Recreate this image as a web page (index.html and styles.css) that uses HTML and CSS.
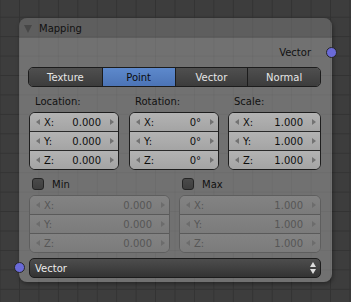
FILE: index.html
```html
<!DOCTYPE html>
<html>
<head>
<meta charset="utf-8">
<link rel="stylesheet" href="styles.css">
</head>
<body>
<div class="canvas">
  <div class="node">
    <div class="hdr"><span class="tri"></span><span>Mapping</span></div>
    <div class="body">
      <div class="out">Vector<span class="sock sock-out"></span></div>
      <div class="tabs">
        <div class="tab">Texture</div>
        <div class="tab on">Point</div>
        <div class="tab">Vector</div>
        <div class="tab">Normal</div>
      </div>
      <div class="cols">
        <div class="col">
          <div class="lbl">Location:</div>
          <div class="num">
            <div class="row"><span class="al"></span><span class="k">X:</span><span class="v">0.000</span><span class="ar"></span></div>
            <div class="row"><span class="al"></span><span class="k">Y:</span><span class="v">0.000</span><span class="ar"></span></div>
            <div class="row"><span class="al"></span><span class="k">Z:</span><span class="v">0.000</span><span class="ar"></span></div>
          </div>
        </div>
        <div class="col">
          <div class="lbl">Rotation:</div>
          <div class="num">
            <div class="row"><span class="al"></span><span class="k">X:</span><span class="v">0°</span><span class="ar"></span></div>
            <div class="row"><span class="al"></span><span class="k">Y:</span><span class="v">0°</span><span class="ar"></span></div>
            <div class="row"><span class="al"></span><span class="k">Z:</span><span class="v">0°</span><span class="ar"></span></div>
          </div>
        </div>
        <div class="col">
          <div class="lbl">Scale:</div>
          <div class="num">
            <div class="row"><span class="al"></span><span class="k">X:</span><span class="v">1.000</span><span class="ar"></span></div>
            <div class="row"><span class="al"></span><span class="k">Y:</span><span class="v">1.000</span><span class="ar"></span></div>
            <div class="row"><span class="al"></span><span class="k">Z:</span><span class="v">1.000</span><span class="ar"></span></div>
          </div>
        </div>
      </div>
      <div class="cols2">
        <div class="col">
          <div class="chk"><span class="cb"></span>Min</div>
          <div class="num dis">
            <div class="row"><span class="al"></span><span class="k">X:</span><span class="v">0.000</span><span class="ar"></span></div>
            <div class="row"><span class="al"></span><span class="k">Y:</span><span class="v">0.000</span><span class="ar"></span></div>
            <div class="row"><span class="al"></span><span class="k">Z:</span><span class="v">0.000</span><span class="ar"></span></div>
          </div>
        </div>
        <div class="col">
          <div class="chk"><span class="cb"></span>Max</div>
          <div class="num dis">
            <div class="row"><span class="al"></span><span class="k">X:</span><span class="v">1.000</span><span class="ar"></span></div>
            <div class="row"><span class="al"></span><span class="k">Y:</span><span class="v">1.000</span><span class="ar"></span></div>
            <div class="row"><span class="al"></span><span class="k">Z:</span><span class="v">1.000</span><span class="ar"></span></div>
          </div>
        </div>
      </div>
      <div class="dd">
        <span class="sock sock-in"></span>
        <span class="ddt">Vector</span>
        <span class="ud"><span class="up"></span><span class="dn"></span></span>
      </div>
    </div>
  </div>
</div>
</body>
</html>
```

FILE: styles.css
```css
html, body {
  margin: 0;
  padding: 0;
  background: #3d3d3d;
}

.canvas {
  width: 351px;
  height: 302px;
  box-sizing: border-box;
  padding: 18px 0 0 19px;
  background-color: #3d3d3d;
  background-image:
    linear-gradient(to right, #333333 1px, transparent 1px),
    linear-gradient(to bottom, #333333 1px, transparent 1px);
  background-size: 19.45px 19.45px;
  background-position: 19px 16.7px;
  font-family: "DejaVu Sans", "Liberation Sans", sans-serif;
  font-size: 10px;
  overflow: hidden;
}

.node {
  width: 313px;
  border-radius: 8px;
  background-color: #717171;
  background-image:
    linear-gradient(to right, rgba(0, 0, 0, 0.045) 1px, transparent 1px),
    linear-gradient(to bottom, rgba(0, 0, 0, 0.045) 1px, transparent 1px);
  background-size: 19.45px 19.45px;
  background-position: 19px 16.7px;
  background-attachment: fixed;
  box-shadow: 1px 2px 4px rgba(0, 0, 0, 0.35);
}

.hdr {
  height: 20px;
  display: flex;
  align-items: center;
  background-color: rgba(0, 0, 0, 0.17);
  border-radius: 8px 8px 0 0;
  color: #111;
  padding-left: 5px;
}

.tri {
  width: 0;
  height: 0;
  border-left: 4.5px solid transparent;
  border-right: 4.5px solid transparent;
  border-top: 8px solid #474747;
  margin-right: 7px;
  margin-top: 1px;
}

.body {
  padding: 0 11px 4px 10px;
}

.out {
  position: relative;
  margin-top: 5px;
  height: 20px;
  line-height: 20px;
  text-align: right;
  padding-right: 10px;
  color: #111;
}

.sock {
  position: absolute;
  width: 9px;
  height: 9px;
  border-radius: 50%;
  background: #6a6ad8;
  border: 1px solid #262626;
}

.sock-out {
  right: -16px;
  top: 4px;
}

.sock-in {
  left: -16px;
  top: 3px;
}

.tabs {
  margin-top: 4px;
  margin-left: -1px;
  height: 20px;
  box-sizing: border-box;
  display: grid;
  grid-template-columns: repeat(4, 1fr);
  border: 1px solid #1c1c1c;
  border-radius: 5px;
  overflow: hidden;
}

.tab {
  display: flex;
  align-items: center;
  justify-content: center;
  color: #e6e6e6;
  background: linear-gradient(#4f4f4f, #3c3c3c);
  border-left: 1px solid #1c1c1c;
}

.tab:first-child {
  border-left: none;
}

.tab.on {
  color: #0c0c0c;
  background: linear-gradient(#5d89cc, #4c74b6);
}

.cols {
  display: grid;
  grid-template-columns: 90px 90px 1fr;
  column-gap: 10px;
}

.cols .col:nth-child(3) {
  margin-left: -1px;
}

.lbl {
  padding: 8px 0 3px 6px;
  line-height: 14px;
  color: #111;
}

.num {
  border: 1px solid #1e1e1e;
  border-radius: 6px;
  overflow: hidden;
  background: #a9a9a9;
}

.row {
  height: 18px;
  display: flex;
  align-items: center;
  padding: 0 4px 0 6px;
  color: #0e0e0e;
  background: linear-gradient(#b3b3b3, #a4a4a4);
  border-top: 1px solid #2a2a2a;
}

.row:first-child {
  border-top: none;
}

.al, .ar {
  width: 0;
  height: 0;
  border-top: 3.5px solid transparent;
  border-bottom: 3.5px solid transparent;
}

.al {
  border-right: 4px solid #727272;
  margin-right: 4px;
}

.ar {
  border-left: 4px solid #727272;
}

.k {
  flex: none;
}

.v {
  flex: 1;
  text-align: right;
  margin-right: 9px;
}

.cols2 {
  display: grid;
  grid-template-columns: 141px 1fr;
  column-gap: 9px;
}

.chk {
  margin-top: 6px;
  margin-bottom: 3px;
  height: 16px;
  display: flex;
  align-items: center;
  padding-left: 3px;
  color: #111;
}

.cb {
  width: 10px;
  height: 10px;
  border: 1px solid #242424;
  border-radius: 3px;
  background: linear-gradient(#4a4a4a, #3e3e3e);
  margin-right: 8px;
}

.num.dis {
  border-color: #5e5e5e;
  background: #7e7e7e;
}

.dis .row {
  background: linear-gradient(#838383, #7b7b7b);
  border-top-color: #5a5a5a;
  color: #565656;
}

.dis .al {
  border-right-color: #6c6c6c;
}

.dis .ar {
  border-left-color: #6c6c6c;
}

.dd {
  position: relative;
  margin-top: 5px;
  height: 20px;
  box-sizing: border-box;
  border: 1px solid #1c1c1c;
  border-radius: 5px;
  background: linear-gradient(#4d4d4d, #333333);
  display: flex;
  align-items: center;
  padding: 0 4px 0 5px;
  color: #ececec;
}

.ddt {
  flex: 1;
}

.ud {
  display: flex;
  flex-direction: column;
  gap: 2px;
}

.up, .dn {
  width: 0;
  height: 0;
  border-left: 3px solid transparent;
  border-right: 3px solid transparent;
}

.up {
  border-bottom: 5px solid #dcdcdc;
}

.dn {
  border-top: 5px solid #dcdcdc;
}
```
